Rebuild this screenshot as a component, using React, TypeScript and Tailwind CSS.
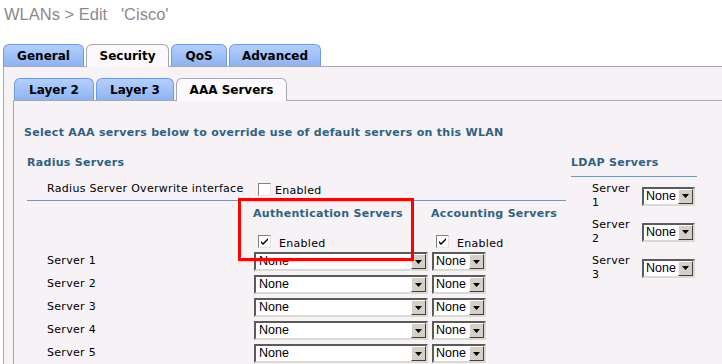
import React from 'react';

const headingCls = "font-bold text-[#2e6283] leading-[14px]";

function Tab({ label, active, width }: { label: string; active?: boolean; width: number }) {
  return (
    <div
      style={{ width }}
      className={
        active
          ? "h-[23px] -mb-px mr-[2px] rounded-t-[6px] border border-b-0 border-[#a9a6ad] bg-[#fbf9fb] flex items-center justify-center font-bold text-[12px] tracking-normal text-black"
          : "h-[22px] mr-[2px] rounded-t-[6px] border border-b-0 border-[#6f9be6] bg-gradient-to-b from-[#b4cffa] to-[#8db3f4] flex items-center justify-center font-bold text-[12px] tracking-normal text-black"
      }
    >
      {label}
    </div>
  );
}

function Select({ width, small }: { width: number; small?: boolean }) {
  return (
    <div
      style={{ width }}
      className="flex h-[19px] bg-white border-2 border-t-[#5b5b5b] border-l-[#5b5b5b] border-b-[#dcd9d2] border-r-[#dcd9d2]"
    >
      <span className={"flex-1 font-['Liberation_Sans',Arial,sans-serif] text-[12.5px] leading-[15px] tracking-normal " + (small ? "pl-[2px]" : "pl-[3px]")}>
        None
      </span>
      <span className="w-[15px] h-[15px] bg-[#d4d0c8] border border-t-white border-l-white border-b-[#404040] border-r-[#404040] flex items-center justify-center">
        <svg width="7" height="4" viewBox="0 0 7 4">
          <path d="M0 0h7L3.5 4z" fill="#000" />
        </svg>
      </span>
    </div>
  );
}

function Checkbox({ checked }: { checked?: boolean }) {
  return (
    <span className="inline-flex w-[13px] h-[13px] bg-white border border-t-[#808080] border-l-[#808080] border-b-[#e6e3de] border-r-[#e6e3de] items-center justify-center">
      {checked && (
        <svg width="9" height="9" viewBox="0 0 9 9">
          <path d="M1 4l2 2 5-5v2L3 8 1 6z" fill="#000" />
        </svg>
      )}
    </span>
  );
}

const servers = ["Server 1", "Server 2", "Server 3", "Server 4", "Server 5"];

export default function App() {
  return (
    <div className="relative w-[722px] h-[364px] overflow-hidden bg-white font-['DejaVu_Sans',Verdana,sans-serif] text-[11px] tracking-[0.3px] text-black">
      <div className="h-[44px] pl-[4px] pt-[2px] whitespace-pre font-['Liberation_Sans',Arial,sans-serif] text-[16.5px] tracking-normal text-[#8a8a8a]">
        {"WLANs > Edit   'Cisco'"}
      </div>

      {/* outer tabs */}
      <div className="ml-[3px] flex items-end border-b border-[#a9a6ad]">
        <Tab label="General" width={81} />
        <Tab label="Security" width={83} active />
        <Tab label="QoS" width={56} />
        <Tab label="Advanced" width={92} />
      </div>

      <div className="ml-[3px] h-[300px] border-l border-[#a9a6ad] bg-[#f6f2f6] pl-[9px] pt-[11px]">
        {/* inner tabs */}
        <div className="flex items-end border-b border-[#a9a6ad] pl-[1px]">
          <Tab label="Layer 2" width={80} />
          <Tab label="Layer 3" width={78} />
          <Tab label="AAA Servers" width={111} active />
        </div>

        <div className="h-[270px] border-l border-[#a9a6ad] bg-[#f6f2f6]">
          <div className={"pl-[10px] pt-[25px] " + headingCls}>
            Select AAA servers below to override use of default servers on this WLAN
          </div>

          <div className="flex pl-[13px] gap-[5px]">
            {/* radius */}
            <div className="w-[539px]">
              <div className={"mt-[16px] " + headingCls}>Radius Servers</div>

              <div className="mt-[9px] grid grid-cols-[227px_178px_1fr] h-[18px] items-center">
                <span className="pl-[20px]">Radius Server Overwrite interface</span>
                <span className="flex items-center pl-[4px]">
                  <Checkbox />
                  <span className="ml-[4px] mt-[4px]">Enabled</span>
                </span>
              </div>

              <div className="mt-[3px] h-px bg-[#7b98ae]" />

              <div className="mt-[6px] grid grid-cols-[227px_178px_1fr] leading-[14px]">
                <span />
                <span className={"-ml-px " + headingCls}>Authentication Servers</span>
                <span className={"-ml-px " + headingCls}>Accounting Servers</span>
              </div>

              <div className="mt-[9px] grid grid-cols-[227px_178px_1fr] h-[18px] items-center">
                <span />
                <span className="flex items-center pl-[4px]">
                  <Checkbox checked />
                  <span className="ml-[8px] mt-[6px]">Enabled</span>
                </span>
                <span className="flex items-center pl-[4px]">
                  <Checkbox checked />
                  <span className="ml-[8px] mt-[6px]">Enabled</span>
                </span>
              </div>

              <div className="mt-[2px]">
                {servers.map((s) => (
                  <div key={s} className="grid grid-cols-[227px_178px_1fr] h-[23px] items-center">
                    <span className="pl-[20px]">{s}</span>
                    <Select width={174} />
                    <Select width={54} small />
                  </div>
                ))}
              </div>
            </div>

            {/* ldap */}
            <div className="w-[126px]">
              <div className={"mt-[16px] " + headingCls}>LDAP Servers</div>
              <div className="mt-[6px] h-px bg-[#7b98ae]" />
              <div className="mt-[1px]">
                {[1, 2, 3].map((n) => (
                  <div key={n} className="flex items-center h-[36px] pl-[21px]">
                    <span className="w-[50px] leading-[14px]">
                      Server
                      <br />
                      {n}
                    </span>
                    <Select width={53} small />
                  </div>
                ))}
              </div>
            </div>
          </div>
        </div>
      </div>

      {/* annotation box */}
      <div className="absolute left-[238px] top-[198px] w-[176px] h-[63px] border-[3px] border-[#ff0000]" />
    </div>
  );
}
